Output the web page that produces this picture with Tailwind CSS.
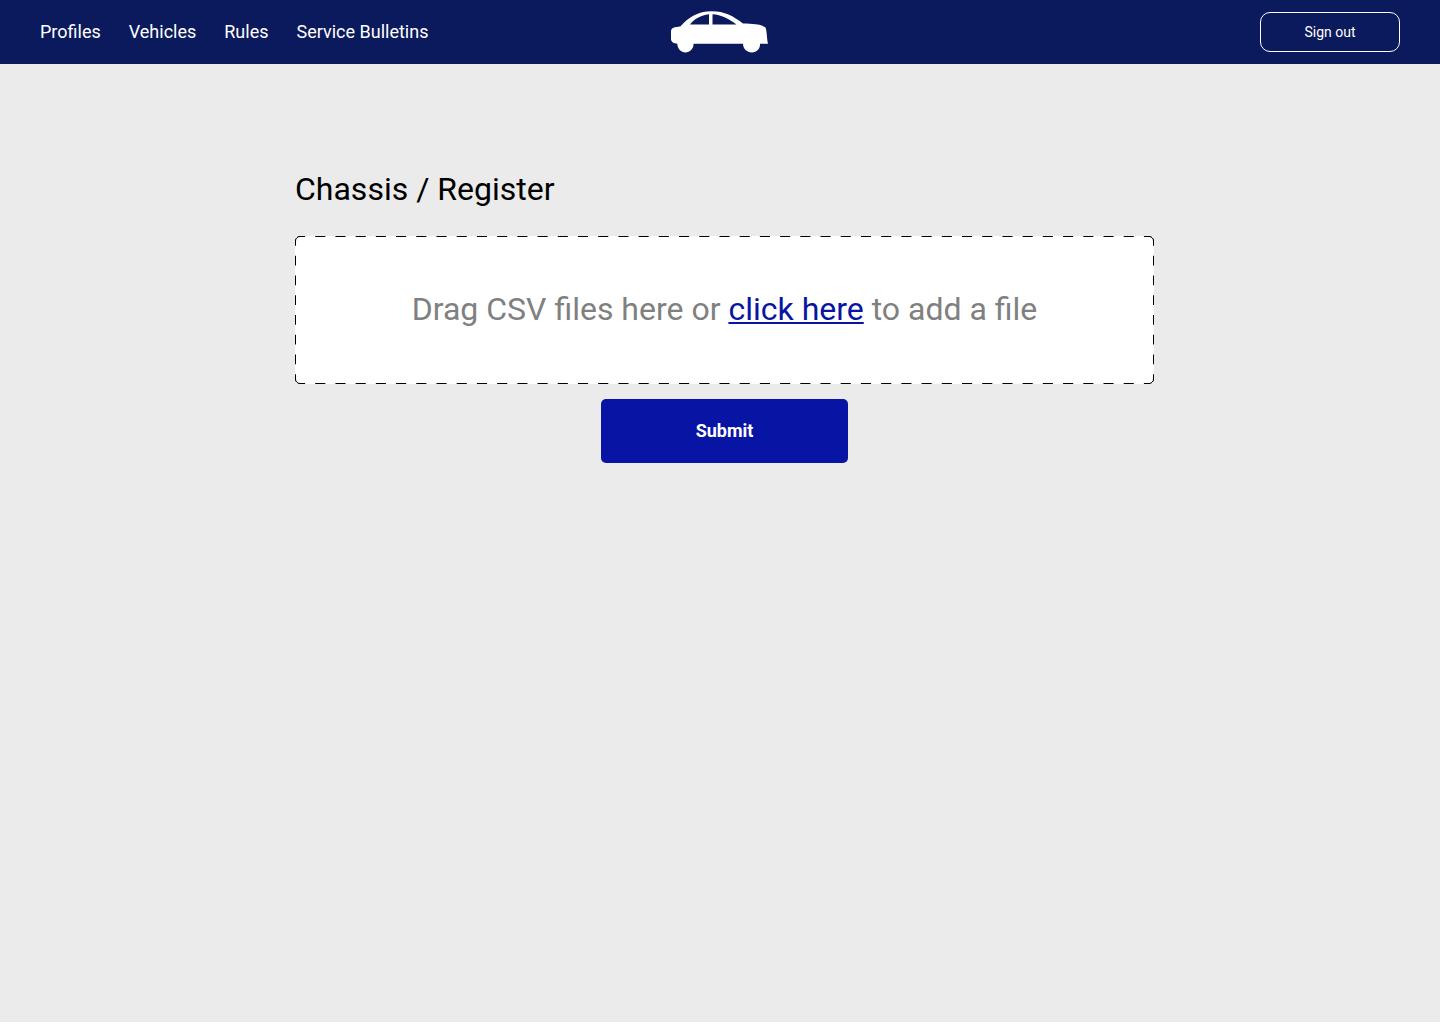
<!DOCTYPE html>
<html lang="en">
<head>
<meta charset="utf-8">
<meta name="viewport" content="width=device-width, initial-scale=1">
<title>Chassis / Register</title>
<script src="https://cdn.jsdelivr.net/npm/@tailwindcss/browser@4"></script>
</head>
<body class="bg-white font-['Roboto',sans-serif] text-black">
<div class="flex min-h-[calc(100vh-2px)] flex-col bg-[#ebebeb]">
  <header class="grid h-16 grid-cols-[1fr_auto_1fr] items-center bg-[#0a1a5c] px-10 text-white">
    <nav class="flex gap-7 text-lg whitespace-nowrap">
      <a href="#">Profiles</a>
      <a href="#">Vehicles</a>
      <a href="#">Rules</a>
      <a href="#">Service Bulletins</a>
    </nav>
    <a href="#" aria-label="Home">
      <svg class="block h-[42px] w-[98px]" viewBox="0 0 98 42" fill="#fff" aria-hidden="true">
        <path fill-rule="evenodd" d="M2 17C4 16 7 16 9.500 15.300C17 6.500 27 .2 40.500 .2C54 .2 62 5 72 12.500C82 12.500 90 13.500 94 16C96 18 95.500 26 97 32.700H89C89.500 37.500 86 41.500 81 41.500C76 41.500 72 37.500 72 32.700H22.500C22.800 37.500 19 41.500 14.500 41.500C10 41.500 6.500 37.500 6.300 32.700C3 32.500 0 31 0 28V20.500C0 19 .5 17.500 2 17ZM19 13.500H38V3.200C30 4 23 8 19 13.500ZM41.500 3.200V13.500H65.500C58.500 8 50 3.500 41.500 3.200Z"/>
      </svg>
    </a>
    <button type="button" class="h-10 w-[140px] justify-self-end rounded-[10px] border border-white text-sm">Sign out</button>
  </header>

  <main class="flex-1 pt-[105px] pl-[9px]">
    <form class="mx-auto flex max-w-[859px] flex-col">
      <h1 class="text-[32px] leading-10">Chassis / Register</h1>
      <div class="relative mt-[27px] flex h-[148px] items-center justify-center overflow-hidden rounded-[5px] bg-white pb-0.5">
        <svg class="pointer-events-none absolute inset-0 h-full w-full" fill="none" stroke="#000" aria-hidden="true">
          <!-- two dash units per period, ending on a dash at each corner -->
          <g stroke-width="2" stroke-dasharray="1 1">
            <line x1="0" y1="0" x2="100%" y2="0" pathLength="85"/>
            <line x1="0" y1="100%" x2="100%" y2="100%" pathLength="85"/>
            <line x1="0" y1="0" x2="0" y2="100%" pathLength="15"/>
            <line x1="100%" y1="0" x2="100%" y2="100%" pathLength="15"/>
          </g>
          <svg overflow="visible"><path d="M.5 5A4.500 4.500 0 0 1 5 .5"/></svg>
          <svg x="100%" overflow="visible"><path d="M-5 .5A4.500 4.500 0 0 1 -.5 5"/></svg>
          <svg y="100%" overflow="visible"><path d="M.5 -5A4.500 4.500 0 0 0 5 -.5"/></svg>
          <svg x="100%" y="100%" overflow="visible"><path d="M-5 -.5A4.500 4.500 0 0 0 -.5 -5"/></svg>
        </svg>
        <p class="text-[32px] leading-10 text-[#808080]">Drag CSV files here or <a href="#" class="text-[#0814a3] underline decoration-2 underline-offset-2">click here</a> to add a file</p>
      </div>
      <button type="submit" class="mt-[15px] h-16 w-[247px] self-center rounded-[5px] bg-[#0814a3] text-lg font-bold text-white">Submit</button>
    </form>
  </main>
</div>
</body>
</html>
